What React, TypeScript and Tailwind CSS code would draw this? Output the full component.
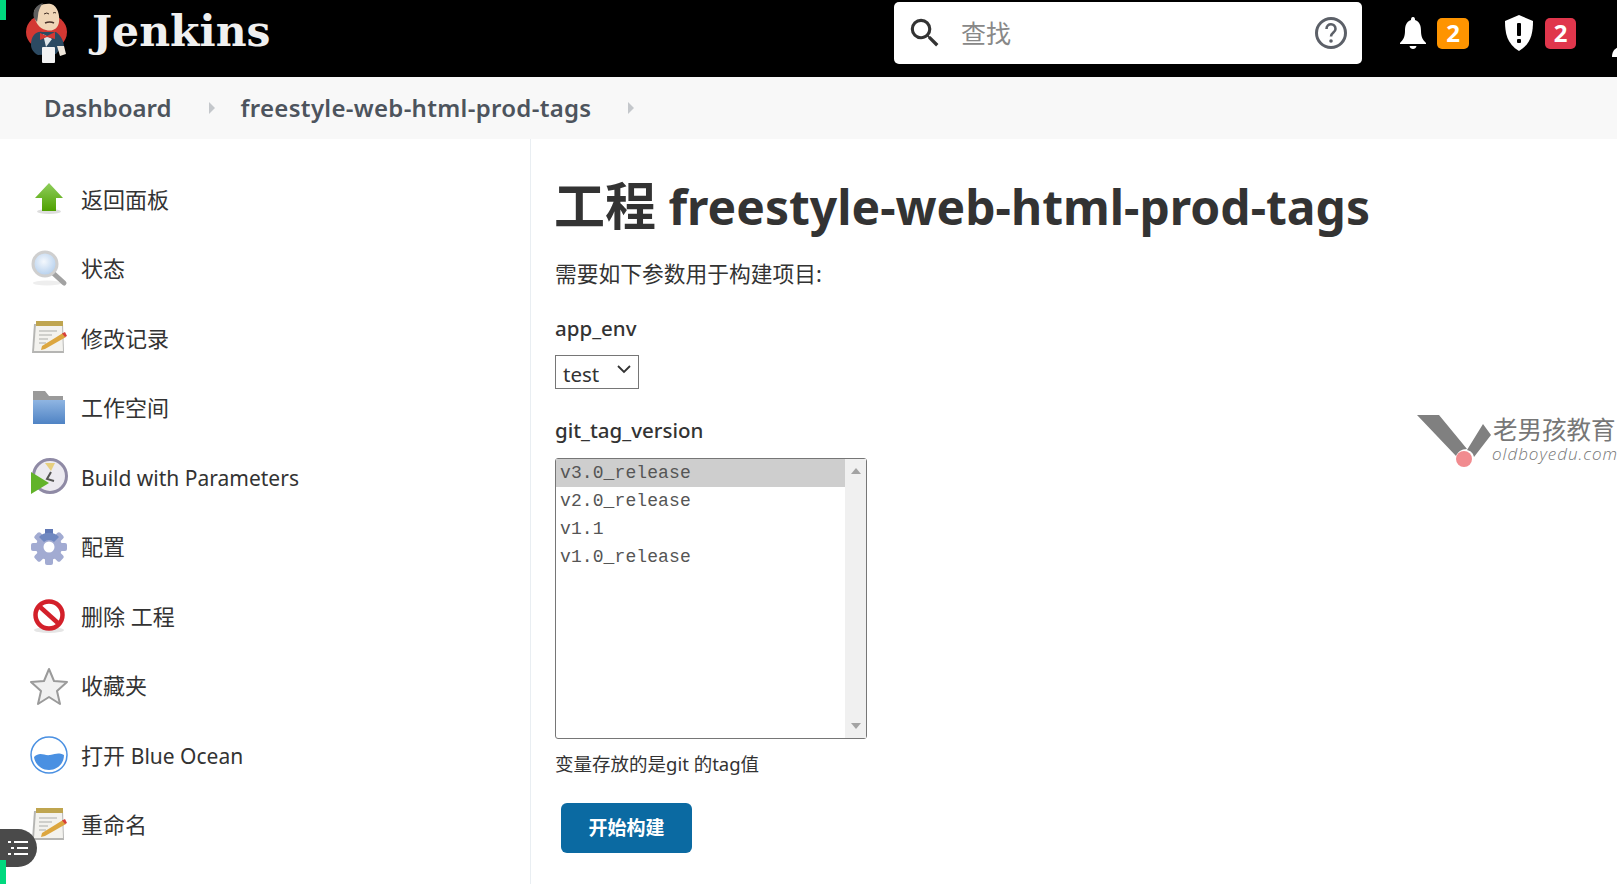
import React from "react";

const cjk = '"Noto Sans", "Noto Sans CJK SC", sans-serif';

function Logo() {
  return (
    <svg width="44" height="60" viewBox="0 0 44 60" className="shrink-0">
      <ellipse cx="21.5" cy="29" rx="20.5" ry="18" fill="#d33833" />
      <path d="M9 9 C10 3 19 0 26 1 C33 3 35 13 34 19 C33 26 27 29 21 27 C14 26 9 18 9 9Z" fill="#f0d6b7" />
      <path d="M9 15 C7 8 11 2 18 0 C15 4 13 8 13 13 L12 19 Z" fill="#5f5f5f" />
      <path d="M20 20 q5 -2 9 0" stroke="#49322a" strokeWidth="1.6" fill="none" />
      <path d="M19 11 q3 -2 5 0 M28 10 q2 -1 3 0" stroke="#3d2a22" strokeWidth="1" fill="none" />
      <path d="M6 42 C6 33 11 28 17 29 L31 29 C37 33 39 40 39 44 L35 46 L31 51 L13 52 C9 50 6 46 6 42Z" fill="#2c4a62" />
      <path d="M18 31 L27 36 L21 44 Z" fill="#dfe5e8" />
      <path d="M15 30 L22 33 L30 29 L30 36 L22 34 L15 37 Z" fill="#d33833" />
      <rect x="17" y="44" width="13" height="16" rx="1" fill="#f2f2f2" />
      <path d="M32 43 l7 0 l2 8 l-6 2 Z" fill="#efe7dc" />
    </svg>
  );
}

function UpIcon() {
  return (
    <svg width="38" height="38" viewBox="0 0 38 38">
      <defs>
        <linearGradient id="upg" x1="0" y1="0" x2="0" y2="1">
          <stop offset="0" stopColor="#8fce5c" />
          <stop offset="1" stopColor="#4fa100" />
        </linearGradient>
      </defs>
      <ellipse cx="19" cy="31.5" rx="12" ry="2.5" fill="#ddd" />
      <path d="M19 3 L33 18 L26 18 L26 31 L12 31 L12 18 L5 18 Z" fill="url(#upg)" />
    </svg>
  );
}

function SearchIcon() {
  return (
    <svg width="38" height="38" viewBox="0 0 38 38">
      <defs>
        <radialGradient id="lens" cx="0.45" cy="0.4" r="0.7">
          <stop offset="0" stopColor="#f4f8fd" />
          <stop offset="1" stopColor="#a9c8ea" />
        </radialGradient>
      </defs>
      <ellipse cx="17" cy="33" rx="14" ry="2.5" fill="#eee" />
      <path d="M23 23 L34 33" stroke="#a2a2a2" strokeWidth="5" strokeLinecap="round" />
      <circle cx="15" cy="14" r="12" fill="url(#lens)" stroke="#cfcfcf" strokeWidth="3" />
    </svg>
  );
}

function NoteIcon() {
  return (
    <svg width="38" height="38" viewBox="0 0 38 38">
      <path d="M2 34 L4 5 L33 5 L34 34 Z" fill="#b5b5b3" />
      <path d="M4 32 L6 5 L32 5 L33 32 Z" fill="#f3f2ee" />
      <rect x="6" y="2" width="27" height="5" fill="#bfa54f" />
      <path d="M9 12 H27 M9 16 H22 M9 20 H18 M9 24 H16" stroke="#c4c4c0" strokeWidth="1.5" />
      <path d="M12 27 L33 14 L36 18 L15 30 L11 31 Z" fill="#dca63f" />
      <path d="M32 14.5 L35 13 L37 17 L35 18 Z" fill="#d6403b" />
    </svg>
  );
}

function FolderIcon() {
  return (
    <svg width="38" height="38" viewBox="0 0 38 38">
      <path d="M3 2 H15 L19 7 H33 V14 H3 Z" fill="#9a9a9a" />
      <defs>
        <linearGradient id="fold" x1="0" y1="0" x2="0" y2="1">
          <stop offset="0" stopColor="#8fb5e2" />
          <stop offset="1" stopColor="#4f83c4" />
        </linearGradient>
      </defs>
      <path d="M3 11 H35 V35 H3 Z" fill="url(#fold)" />
    </svg>
  );
}

function ClockIcon() {
  return (
    <svg width="38" height="38" viewBox="0 0 38 38">
      <circle cx="20" cy="18" r="16.5" fill="#eceaf0" stroke="#8f8aa5" strokeWidth="3" />
      <path d="M15 5 L25 5 L21 13 Z" fill="#e7cf7e" />
      <path d="M21 14 L17 21 L24 23" stroke="#555" strokeWidth="2" fill="none" />
      <path d="M1 14 L19 25 L1 36 Z" fill="#62b32a" />
    </svg>
  );
}

function GearIcon() {
  return (
    <svg width="38" height="38" viewBox="0 0 38 38">
      <g fill="#a2abd2">
        <circle cx="19" cy="19" r="13" />
        <rect x="15" y="1" width="8" height="36" rx="2" />
        <rect x="1" y="15" width="36" height="8" rx="2" />
        <rect x="15" y="1" width="8" height="36" rx="2" transform="rotate(45 19 19)" />
        <rect x="15" y="1" width="8" height="36" rx="2" transform="rotate(-45 19 19)" />
      </g>
      <path d="M15 1 H23 V9 H15 Z" fill="#6078b5" />
      <path d="M9 9 A14 14 0 0 1 29 9 L24 14 A7 7 0 0 0 14 14 Z" fill="#7088c0" />
      <circle cx="19" cy="19" r="5.5" fill="#fff" />
    </svg>
  );
}

function NoIcon() {
  return (
    <svg width="38" height="38" viewBox="0 0 38 38">
      <ellipse cx="19" cy="33" rx="15" ry="3" fill="#e5e5e5" />
      <circle cx="19" cy="18" r="13.5" fill="#fff" stroke="#d3202a" strokeWidth="4.5" />
      <path d="M9 9 L29 27" stroke="#d3202a" strokeWidth="4.5" />
    </svg>
  );
}

function StarIcon() {
  return (
    <svg width="38" height="38" viewBox="0 0 38 38">
      <path d="M19 2 L24 14 L37 15 L27 24 L30 37 L19 30 L8 37 L11 24 L1 15 L14 14 Z" fill="#f1f1f1" stroke="#9a9a9a" strokeWidth="2" strokeLinejoin="round" />
    </svg>
  );
}

function OceanIcon() {
  return (
    <svg width="38" height="38" viewBox="0 0 38 38">
      <circle cx="19" cy="19" r="18" fill="#fff" stroke="#4a90e2" strokeWidth="1.5" />
      <path d="M4 21 C10 15 14 20 20 19 C26 18 28 16 34 19 C34 28 27 34 19 34 C11 34 5 28 4 21Z" fill="#4a90e2" />
    </svg>
  );
}

const items: [React.ReactNode, React.ReactNode, string][] = [
  [<UpIcon />, "返回面板", "a"],
  [<SearchIcon />, "状态", "b"],
  [<NoteIcon />, "修改记录", "c"],
  [<FolderIcon />, "工作空间", "d"],
  [<ClockIcon />, <span className="text-[21px]">Build with Parameters</span>, "e"],
  [<GearIcon />, "配置", "f"],
  [<NoIcon />, "删除 工程", "g"],
  [<StarIcon />, "收藏夹", "h"],
  [<OceanIcon />, <>打开 <span className="text-[21px]">Blue Ocean</span></>, "i"],
  [<NoteIcon />, "重命名", "j"],
];

function Caret() {
  return (
    <svg width="8" height="12" viewBox="0 0 8 12">
      <path d="M1 0 L7 6 L1 12 Z" fill="#c4c7cb" />
    </svg>
  );
}

export default function App() {
  return (
    <div className="relative h-[884px] w-full overflow-hidden bg-white text-[#333]" style={{ fontFamily: cjk }}>
      <header className="flex h-[77px] items-center overflow-hidden bg-black pb-[11px]">
        <div className="ml-[25px] w-[44px] shrink-0"><Logo /></div>
        <span className="ml-[23px] mt-[-4px] w-[178px] shrink-0 whitespace-nowrap text-[42.5px] font-bold leading-none text-[#f0f0f0]" style={{ fontFamily: '"DejaVu Serif", serif' }}>
          Jenkins
        </span>
        <div className="ml-[624px] flex h-[62px] w-[468px] shrink-0 items-center rounded-[5px] bg-white">
          <svg width="38" height="38" viewBox="0 0 24 24" className="ml-[12px]" fill="#333">
            <path d="M15.5 14h-.79l-.28-.27A6.471 6.471 0 0 0 16 9.5 6.5 6.5 0 1 0 9.5 16c1.61 0 3.09-.59 4.23-1.57l.27.28v.79l5 4.99L20.49 19l-4.99-5zm-6 0C7.01 14 5 11.99 5 9.5S7.01 5 9.5 5 14 7.01 14 9.5 11.99 14 9.5 14z" />
          </svg>
          <span className="ml-[17px] mt-[1px] text-[25px] text-[#888]">查找</span>
          <svg width="34" height="34" viewBox="0 0 34 34" className="ml-auto mr-[14px]">
            <circle cx="17" cy="17" r="14.5" fill="none" stroke="#5c6068" strokeWidth="3" />
            <path d="M12.5 13 C12.5 6.5 21.5 7 21.5 13 C21.5 16.5 17 16.5 17 20.5" fill="none" stroke="#5c6068" strokeWidth="2.6" />
            <circle cx="17" cy="25" r="1.8" fill="#5c6068" />
          </svg>
        </div>
        <svg width="28" height="34" viewBox="0 0 28 34" className="ml-[37px] shrink-0" fill="#fff">
          <path d="M14 1 C12 1 12 3 12 4 C7 6 6 10 6 15 C6 21 4 24 1 27 L1 28 H27 L27 27 C24 24 22 21 22 15 C22 10 21 6 16 4 C16 3 16 1 14 1Z" />
          <path d="M10.5 30 H17.5 C17 34 11 34 10.5 30Z" />
        </svg>
        <span className="ml-[10px] flex h-[31px] w-[32px] shrink-0 items-center justify-center rounded-[5px] bg-[#fe9400] text-[24px] font-bold text-white">2</span>
        <svg width="30" height="36" viewBox="0 0 30 36" className="ml-[35px] shrink-0">
          <path d="M15 0 L29 6 C29 18 27 29 15 36 C3 29 1 18 1 6 Z" fill="#fff" />
          <rect x="13" y="8" width="4" height="13" rx="1" fill="#000" />
          <rect x="13" y="24" width="4" height="4" rx="1" fill="#000" />
        </svg>
        <span className="ml-[11px] flex h-[31px] w-[31px] shrink-0 items-center justify-center rounded-[5px] bg-[#e0364c] text-[24px] font-bold text-white">2</span>
        <svg width="30" height="34" viewBox="0 0 30 34" className="ml-[35px] mt-[20px] shrink-0" fill="#fff">
          <circle cx="15" cy="10" r="8" />
          <path d="M1 31 C1 22 8 20 15 20 C22 20 29 22 29 31 Z" />
        </svg>
      </header>

      <nav className="flex h-[62px] items-center bg-[#f8f8f8] text-[24px] font-semibold text-[#4d545d]">
        <span className="ml-[44px]">Dashboard</span>
        <span className="ml-[36px] flex"><Caret /></span>
        <span className="ml-[25px] tracking-[0.3px]">freestyle-web-html-prod-tags</span>
        <span className="ml-[35px] flex"><Caret /></span>
      </nav>

      <div className="flex h-[745px]">
        <aside className="h-full w-[531px] shrink-0 border-r border-[#e9eef2] pt-[25.5px]">
          {items.map(([icon, label, id]) => (
            <div key={id} className="flex h-[69.5px] items-center pl-[30px]">
              <span className="flex h-[38px] w-[38px] shrink-0">{icon}</span>
              <span className="ml-[13px] text-[22px] text-[#333]">{label}</span>
            </div>
          ))}
        </aside>

        <main className="flex-1 pl-[24px]">
          <h1 className="-ml-px mt-[31px] text-[48px] font-bold leading-[70px] text-[#333]">
            <span className="text-[51px]">工程</span> freestyle-web-html-prod-tags
          </h1>
          <p className="mt-[16px] text-[21.75px] leading-[32px]">需要如下参数用于构建项目:</p>
          <div className="mt-[22px] text-[20.5px] font-medium leading-[32px]">app_env</div>
          <div className="mt-[11px] flex h-[34px] w-[84px] items-center border border-[#767676] pl-[7px] text-[20.5px]">
            <span className="pt-[4px]">test</span>
            <svg width="14" height="9" viewBox="0 0 14 9" className="ml-auto mr-[7px] mt-[-5px]">
              <path d="M1 1 L7 7 L13 1" fill="none" stroke="#333" strokeWidth="1.8" />
            </svg>
          </div>
          <div className="mt-[25px] text-[20.5px] font-medium leading-[32px]">git_tag_version</div>
          <div className="mt-[12px] flex h-[281px] w-[312px] rounded-[3px] border border-[#767676]">
            <div className="flex-1 text-[18px] leading-[28px] text-[#555] tracking-[0.1px]" style={{ fontFamily: '"Liberation Mono", monospace' }}>
              <div className="bg-[#cecece] pl-[4px]">v3.0_release</div>
              <div className="pl-[4px]">v2.0_release</div>
              <div className="pl-[4px]">v1.1</div>
              <div className="pl-[4px]">v1.0_release</div>
            </div>
            <div className="flex w-[21px] flex-col items-center justify-between bg-[#f0f0f0] py-[9px]">
              <svg width="10" height="6" viewBox="0 0 10 6"><path d="M0 6 L5 0 L10 6 Z" fill="#a3a3a3" /></svg>
              <svg width="10" height="6" viewBox="0 0 10 6"><path d="M0 0 L5 6 L10 0 Z" fill="#a3a3a3" /></svg>
            </div>
          </div>
          <p className="mt-[10px] text-[18.5px] leading-[30px] text-[#333]">变量存放的是git 的tag值</p>
          <button className="ml-[6px] mt-[24px] flex h-[50px] w-[131px] items-center justify-center rounded-[6px] bg-[#0b6aa2] text-[19px] font-bold text-white">
            开始构建
          </button>
        </main>
      </div>

      <div className="absolute left-0 top-0 h-[20px] w-[6px] bg-[#00d97e]" />
      <div className="absolute left-0 top-[829px] flex h-[38px] w-[37px] items-center justify-center rounded-r-[19px] bg-[#4a4a4a]">
        <svg width="22" height="20" viewBox="0 0 22 20" fill="#fff">
          <rect x="0" y="3" width="3" height="2" /><rect x="6" y="3" width="14" height="2" />
          <rect x="3" y="9" width="3" height="2" /><rect x="9" y="9" width="11" height="2" />
          <rect x="0" y="15" width="3" height="2" /><rect x="6" y="15" width="14" height="2" />
        </svg>
      </div>
      <div className="absolute bottom-0 left-0 h-[24px] w-[6px] bg-[#00d97e]" />

      <div className="absolute left-[1417px] top-[412px] flex">
        <svg width="76" height="58" viewBox="0 0 76 58" className="shrink-0">
          <path d="M0 3 H22 L50 37 C44 37 41 40 39 44 Z" fill="#808080" />
          <path d="M50 38 L66 12 L74 23 L57 45 C56 41 54 39 50 38Z" fill="#808080" />
          <circle cx="47" cy="47" r="8" fill="#f18b8f" />
        </svg>
        <div className="whitespace-nowrap text-[#777]">
          <div className="mt-[3px] text-[24.5px] leading-[30px]">老男孩教育</div>
          <div className="-ml-[1px] text-[17px] font-light italic leading-[17px] tracking-[1px]" style={{ fontFamily: '"Open Sans", sans-serif' }}>oldboyedu.com</div>
        </div>
      </div>
    </div>
  );
}
